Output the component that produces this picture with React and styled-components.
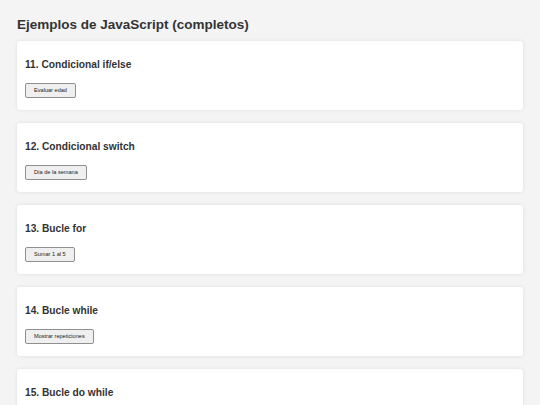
import React from "react";
import styled, { createGlobalStyle } from "styled-components";

const GlobalStyle = createGlobalStyle`
  html, body {
    margin: 0;
    padding: 0;
    background-color: #f4f4f4;
    font-family: "Liberation Sans", Arial, sans-serif;
  }
`;

const Page = styled.div`
  padding: 17px 17px 0;
`;

const Title = styled.h1`
  font-size: 13.5px;
  line-height: 15px;
  font-weight: bold;
  color: #333;
  margin: 0 0 9px;
`;

const Card = styled.section`
  background-color: #ffffff;
  border-radius: 3px;
  box-shadow: 0 0 4px rgba(0, 0, 0, 0.09);
  padding: 18px 8px 12px;
  margin-bottom: 13px;
`;

const Heading = styled.h3`
  font-size: 10.2px;
  line-height: 12px;
  font-weight: bold;
  color: #333;
  margin: 0 0 12px;
`;

const Button = styled.button`
  display: block;
  font-family: "Liberation Sans", Arial, sans-serif;
  font-size: 5.6px;
  line-height: 7px;
  color: #222;
  background-color: #efefef;
  border: 1px solid #8f8f8f;
  border-radius: 2px;
  padding: 3px 8px;
  height: 15px;
  cursor: pointer;
`;

const examples = [
  { title: "11. Condicional if/else", label: "Evaluar edad" },
  { title: "12. Condicional switch", label: "Día de la semana" },
  { title: "13. Bucle for", label: "Sumar 1 al 5" },
  { title: "14. Bucle while", label: "Mostrar repeticiones" },
  { title: "15. Bucle do while", label: "Contar hacia atrás" },
];

const App = () => {
  return (
    <>
      <GlobalStyle />
      <Page>
        <Title>Ejemplos de JavaScript (completos)</Title>
        {examples.map((ex) => (
          <Card key={ex.title}>
            <Heading>{ex.title}</Heading>
            <Button>{ex.label}</Button>
          </Card>
        ))}
      </Page>
    </>
  );
};

export default App;
